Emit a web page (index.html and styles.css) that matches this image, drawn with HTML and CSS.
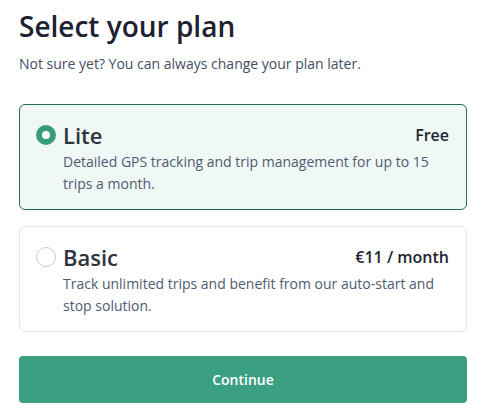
FILE: index.html
```html
<!DOCTYPE html>
<html lang="en">
<head>
<meta charset="utf-8">
<link rel="stylesheet" href="styles.css">
</head>
<body>
<main class="page">
  <h1 class="title">Select your plan</h1>
  <p class="subtitle">Not sure yet? You can always change your plan later.</p>
  <div class="plans">
    <label class="plan plan--selected">
      <div class="plan-head">
        <span class="radio radio--on"></span>
        <span class="plan-name">Lite</span>
        <span class="plan-price">Free</span>
      </div>
      <p class="plan-desc">Detailed GPS tracking and trip management for up to 15 trips a month.</p>
    </label>
    <label class="plan">
      <div class="plan-head">
        <span class="radio"></span>
        <span class="plan-name">Basic</span>
        <span class="plan-price">€11 / month</span>
      </div>
      <p class="plan-desc">Track unlimited trips and benefit from our auto-start and stop solution.</p>
    </label>
  </div>
  <button class="continue">Continue</button>
</main>
</body>
</html>
```
FILE: styles.css
```css
* { box-sizing: border-box; }
body {
  margin: 0;
  background: #fff;
  font-family: "Open Sans", "Noto Sans", sans-serif;
}
.page {
  padding: 6px 18px 0 19px;
  display: flex;
  flex-direction: column;
}
.title {
  margin: 0;
  font-size: 28px;
  line-height: 40px;
  font-weight: 600;
  color: #1c2230;
}
.subtitle {
  margin: 8px 0 0;
  font-size: 14px;
  line-height: 20px;
  color: #444e63;
}
.plans {
  margin-top: 30px;
  display: flex;
  flex-direction: column;
  gap: 16px;
}
.plan {
  display: block;
  border: 1px solid #e3e5e8;
  border-radius: 6px;
  background: #fff;
  padding: 16px 17px 14px 16px;
}
.plan--selected {
  border-color: #2b6b55;
  background: #f0f8f6;
}
.plan-head {
  display: flex;
  align-items: center;
  height: 28px;
  margin-bottom: 2px;
}
.radio {
  width: 20px;
  height: 20px;
  border-radius: 50%;
  border: 1px solid #c9cbcf;
  background: #fff;
  margin-right: 7px;
  flex: none;
}
.radio--on {
  border: 6px solid #3a9c7e;
  background: #fff;
}
.plan-name {
  font-size: 22px;
  font-weight: 600;
  color: #2d3440;
  line-height: 28px;
}
.plan-price {
  margin-left: auto;
  font-size: 16px;
  font-weight: 600;
  color: #1e2532;
}
.plan-desc {
  margin: 0;
  padding-left: 27px;
  font-size: 14px;
  line-height: 22px;
  color: #4f5b72;
}
.continue {
  margin-top: 24px;
  height: 47px;
  border: none;
  border-radius: 4px;
  background: #3ba081;
  color: #fff;
  font-family: inherit;
  font-size: 14px;
  font-weight: 600;
}
```
